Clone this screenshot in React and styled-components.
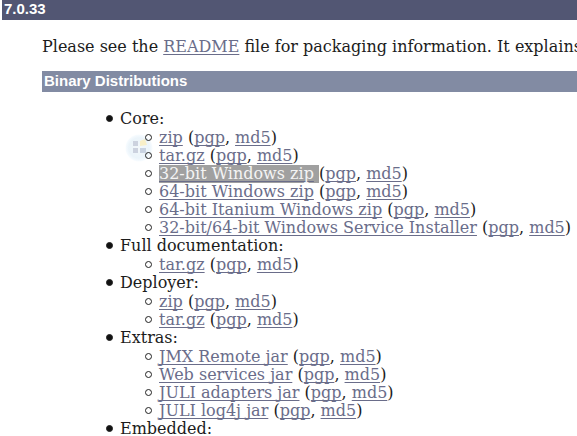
import React from "react";
import styled, { createGlobalStyle } from "styled-components";

const GlobalStyle = createGlobalStyle`
  body {
    margin: 0;
    background-color: #fff;
    color: #1c1c1c;
    font-family: "DejaVu Serif", serif;
    font-size: 16px;
    line-height: 18px;
    overflow: hidden;
  }
`;

const Page = styled.main`
  padding-left: 2px;
`;
const Version = styled.h2`
  margin: 0;
  padding: 0 2px 2px;
  background-color: #525673;
  color: #fff;
  font-family: "Liberation Sans", Arial, sans-serif;
  font-size: 15px;
  line-height: 18px;
`;
const Content = styled.section`
  padding-left: 40px;
`;
const Intro = styled.p`
  margin: 18px 0 15px;
  white-space: nowrap;
`;
const Heading = styled.h3`
  margin: 0;
  padding: 1px 2px 2px;
  background-color: #828ba3;
  color: #fff;
  font-family: "Liberation Sans", Arial, sans-serif;
  font-size: 15px;
  line-height: 18px;
`;
const Link = styled.a`
  color: #6a6d8a;
  text-decoration: underline;
  text-decoration-thickness: 1px;
  text-underline-offset: 2px;
  text-decoration-skip-ink: none;
`;
const Groups = styled.ul`
  margin: 18px 0 0;
  padding-left: 78px;
  list-style: none;
`;
const Files = styled.ul`
  margin: 1px 0 0;
  padding-left: 39px;
  list-style: none;
`;
const Item = styled.li`
  position: relative;
  white-space: nowrap;

  &::before {
    content: "";
    display: inline-block;
    box-sizing: border-box;
    width: 7px;
    height: 7px;
    margin: 0 7px 2px -14px;
    border: 1px solid #222;
    border-radius: 50%;
    background-color: ${({ $filled }) => ($filled ? "#111" : "transparent")};
  }
`;
const Selection = styled.span`
  display: inline-block;
  background-color: #a0a0a0;

  ${Link} {
    color: #f4f4f4;
    text-decoration-color: #6a6d8a;
  }
`;
const Badge = styled.svg`
  position: absolute;
  left: 5px;
  top: 24px;
  z-index: -1;
`;

const groups = [
  {
    name: "Core",
    files: [
      "zip",
      "tar.gz",
      "32-bit Windows zip",
      "64-bit Windows zip",
      "64-bit Itanium Windows zip",
      "32-bit/64-bit Windows Service Installer",
    ],
  },
  { name: "Full documentation", files: ["tar.gz"] },
  { name: "Deployer", files: ["zip", "tar.gz"] },
  {
    name: "Extras",
    files: [
      "JMX Remote jar",
      "Web services jar",
      "JULI adapters jar",
      "JULI log4j jar",
    ],
  },
  { name: "Embedded", files: [] },
];

const selectedFile = "32-bit Windows zip";

const WindowsBadge = () => (
  <Badge width="28" height="28" viewBox="0 0 28 28" aria-hidden="true">
    <defs>
      <radialGradient id="orb">
        <stop offset="0" stopColor="#f3f8fb" />
        <stop offset="0.75" stopColor="#ebf4fa" />
        <stop offset="1" stopColor="#f8fcff" />
      </radialGradient>
    </defs>
    <circle cx="14" cy="14" r="13.5" fill="url(#orb)" />
    <rect x="8" y="7" width="5" height="5" fill="#ccd2df" />
    <path d="M15 7L20 5L22 11L15 12Z" fill="#f8efc8" />
    <rect x="8" y="14" width="5" height="5" fill="#ccd2df" />
    <rect x="15" y="14" width="6" height="5" fill="#c9d3e1" />
  </Badge>
);

const FileItem = ({ name }) => (
  <Item>
    {name === selectedFile ? (
      <Selection>
        <Link href="#download">{name}</Link>&nbsp;
      </Selection>
    ) : (
      <>
        <Link href="#download">{name}</Link>{" "}
      </>
    )}
    (<Link href="#pgp">pgp</Link>, <Link href="#md5">md5</Link>)
  </Item>
);

const App = () => {
  return (
    <>
      <GlobalStyle />
      <Page>
        <Version>7.0.33</Version>
        <Content>
          <Intro>
            Please see the <Link href="#readme">README</Link> file for packaging
            information. It explains
          </Intro>
          <Heading>Binary Distributions</Heading>
          <Groups>
            {groups.map((group, index) => (
              <Item key={group.name} $filled>
                {group.name}:
                {index === 0 && <WindowsBadge />}
                {group.files.length > 0 && (
                  <Files>
                    {group.files.map((file) => (
                      <FileItem key={file} name={file} />
                    ))}
                  </Files>
                )}
              </Item>
            ))}
          </Groups>
        </Content>
      </Page>
    </>
  );
};

export default App;
